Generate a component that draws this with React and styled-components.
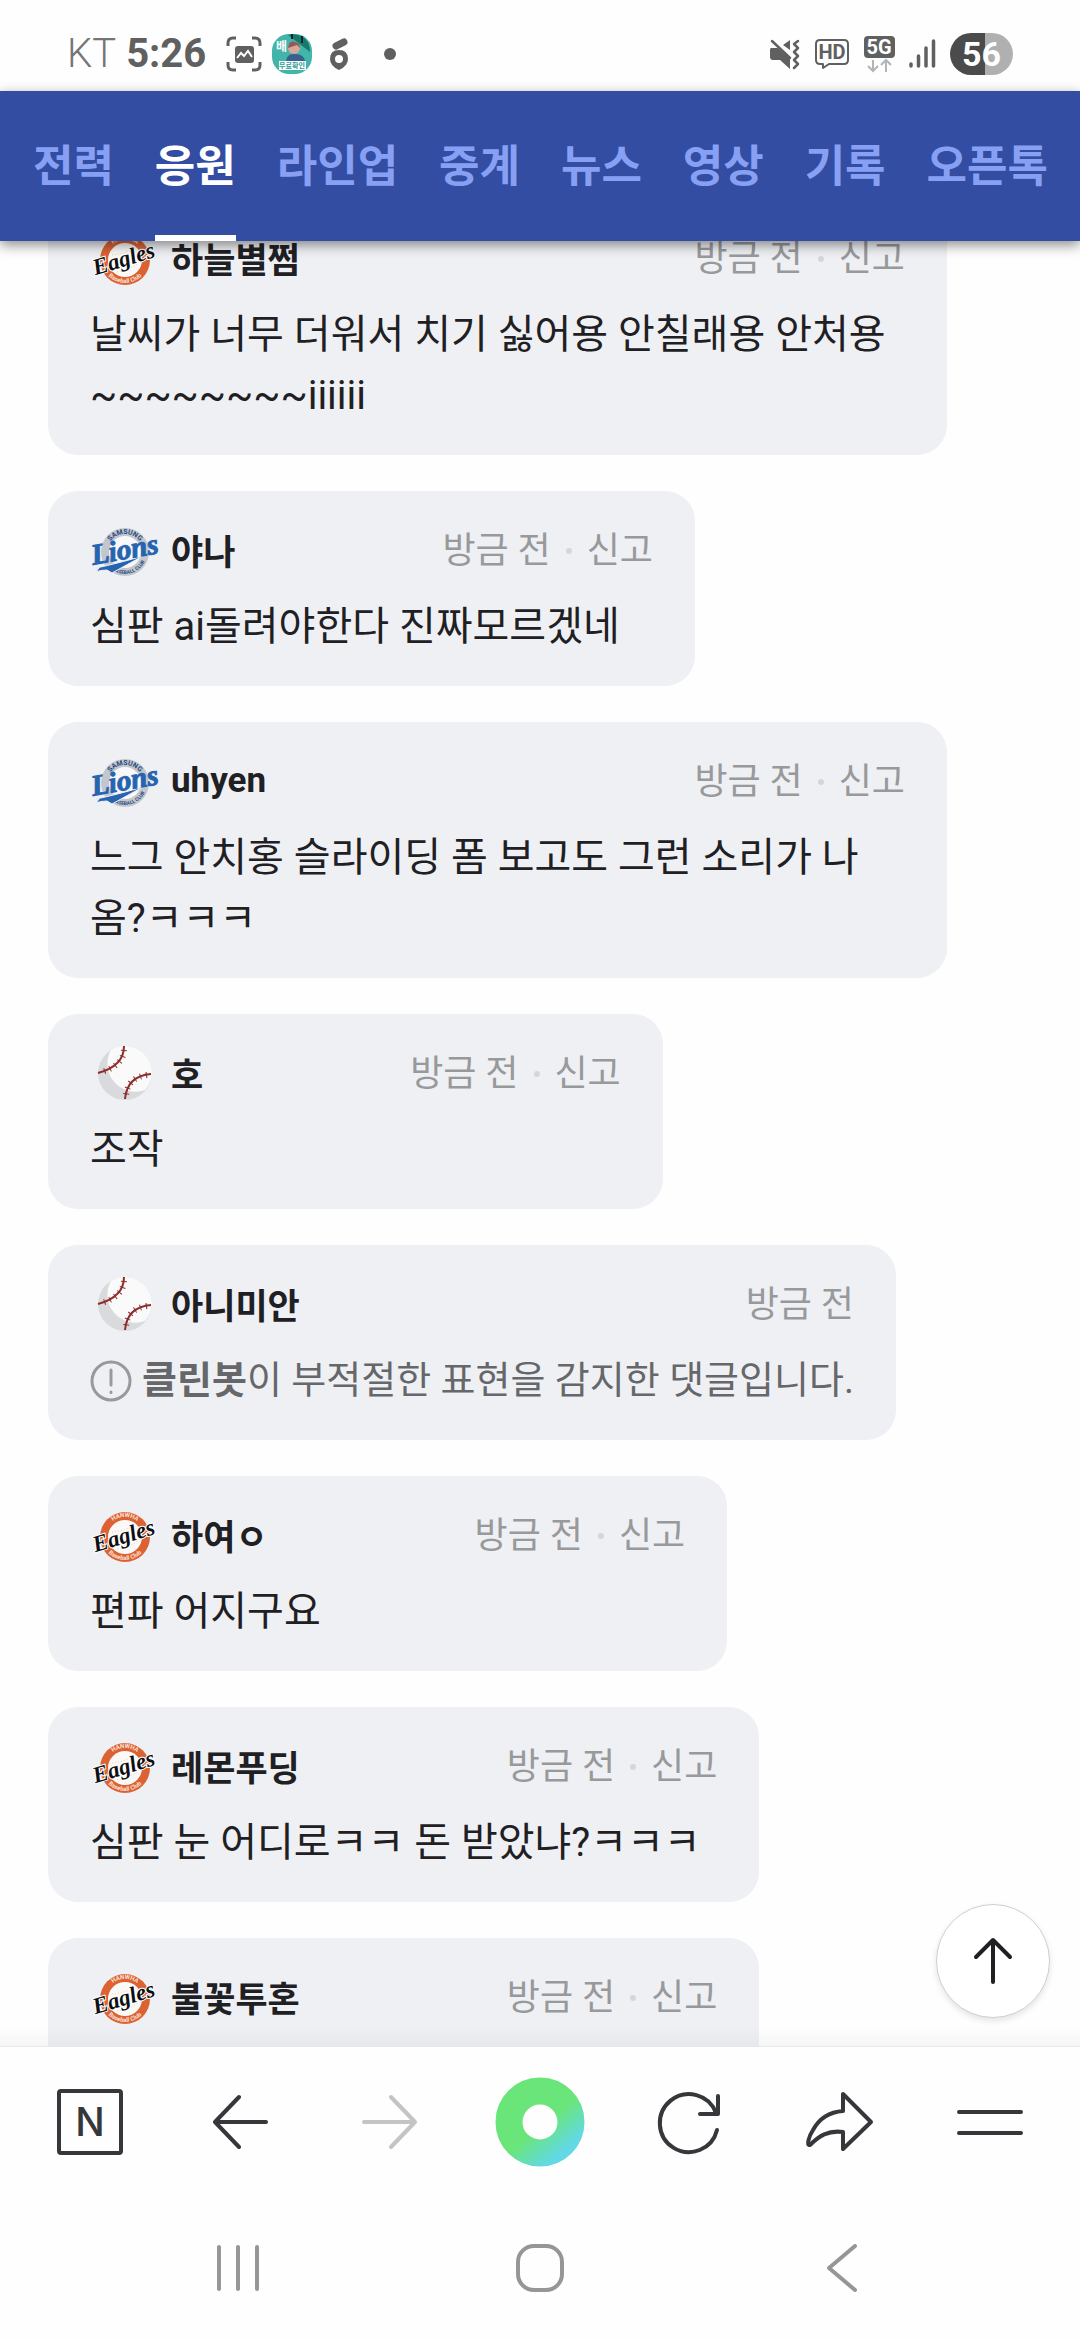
import React, { useId, useState } from 'react';
import styled, { createGlobalStyle } from 'styled-components';

const GlobalStyle = createGlobalStyle`
  * {
    box-sizing: border-box;
  }

  body {
    margin: 0;
    background: #fefefe;
    color: #1f2023;
    font-family: Roboto, 'Noto Sans CJK KR', sans-serif;
  }

  button {
    padding: 0;
    border: none;
    background: none;
    color: inherit;
    font: inherit;
    cursor: pointer;
  }

  svg {
    display: block;
    flex: none;
  }
`;

const Screen = styled.div`
  display: flex;
  flex-direction: column;
  height: 100vh;
  overflow: hidden;
`;

/* status bar */

const StatusBar = styled.div`
  display: flex;
  flex: none;
  align-items: center;
  justify-content: space-between;
  height: 91px;
  padding: 16px 67px 0;
  color: #606060;
`;

const StatusGroup = styled.div`
  display: flex;
  align-items: center;
  gap: ${props => props.$gap}px;
`;

const Carrier = styled.span`
  color: #757575;
  font-size: 40px;
  font-weight: 300;
  line-height: 44px;
`;

const Clock = styled.span`
  margin-right: 10px;
  font-size: 40px;
  font-weight: 700;
  line-height: 44px;
`;

const MoreDot = styled.span`
  width: 12px;
  height: 12px;
  margin-left: 16px;
  border-radius: 50%;
  background: #606060;
`;

const Battery = styled.span`
  width: 63px;
  height: 42px;
  border-radius: 21px;
  background: linear-gradient(90deg, #4b4b4b 56%, #b0b0b0 56%);
  color: #fff;
  font-size: 34px;
  font-weight: 700;
  line-height: 42px;
  text-align: center;
`;

/* tabs */

const TabBar = styled.nav`
  position: relative;
  z-index: 2;
  display: flex;
  flex: none;
  justify-content: space-between;
  height: 150px;
  padding: 0 32px 0 33px;
  background: #324da1;
  box-shadow: 0 4px 12px rgba(0, 0, 0, 0.45);
`;

const Tab = styled.a`
  display: flex;
  align-items: center;
  border-bottom: 6px solid ${props => (props.$active ? '#fff' : 'transparent')};
  color: ${props => (props.$active ? '#fff' : '#87a0f3')};
  font-size: 44px;
  font-weight: 700;
  text-decoration: none;
  white-space: nowrap;
`;

/* comments */

const Feed = styled.main`
  position: relative;
  flex: 1;
  min-height: 0;
  overflow: hidden;

  &::after {
    content: '';
    position: absolute;
    right: 0;
    bottom: 0;
    left: 0;
    height: 20px;
    background: linear-gradient(rgba(30, 40, 70, 0), rgba(30, 40, 70, 0.04));
  }
`;

const CommentList = styled.ul`
  display: flex;
  flex-direction: column;
  align-items: flex-start;
  gap: 36px;
  margin: -42px 0 0;
  padding: 0 48px;
  list-style: none;
`;

const Card = styled.li`
  width: ${props => (props.$long ? '100%' : 'fit-content')};
  max-width: 899px;
  padding: 30px 42px 29px;
  border-radius: 30px;
  background: #eff0f4;
`;

const CardHeader = styled.div`
  display: flex;
  align-items: center;
  height: 56px;
`;

const Nickname = styled.strong`
  margin: 0 207px 0 11px;
  font-size: 35px;
  font-weight: 700;
  white-space: nowrap;
`;

const Meta = styled.div`
  display: flex;
  align-items: center;
  gap: 15px;
  margin-left: auto;
  padding-top: 4px;
  color: #98999b;
  font-size: 36px;
  line-height: 48px;
  white-space: nowrap;
`;

const MetaDot = styled.span`
  width: 6px;
  height: 6px;
  border-radius: 50%;
  background: #d5d6da;
`;

const Message = styled.p`
  min-height: 61px;
  margin: 19px 0 0;
  font-size: 40px;
  line-height: 61px;
  white-space: pre-line;
  word-break: break-all;
`;

const CleanbotMessage = styled.p`
  display: flex;
  align-items: center;
  gap: 10px;
  margin: 19px 0 0;
  color: #66676a;
  font-size: 38px;
  line-height: 61px;
`;

const TopButton = styled.button`
  position: absolute;
  right: 30px;
  bottom: 28px;
  z-index: 1;
  display: flex;
  align-items: center;
  justify-content: center;
  width: 114px;
  height: 114px;
  border: 1px solid #cfcfd1;
  border-radius: 50%;
  background: #fff;
  box-shadow: 0 3px 6px rgba(0, 0, 0, 0.1);
`;

/* bottom bars */

const BrowserBar = styled.nav`
  display: grid;
  flex: none;
  grid-template-columns: repeat(7, 1fr);
  height: 150px;
  padding: 0 15px;
  border-top: 1px solid #e6e7ea;
  background: #fefefe;
  color: #36373b;
`;

const SystemBar = styled.nav`
  display: grid;
  flex: none;
  grid-template-columns: repeat(3, 1fr);
  height: 144px;
  padding: 0 87px;
  color: #969696;
`;

const BarButton = styled.button`
  display: flex;
  align-items: center;
  justify-content: center;

  &:disabled {
    color: #c4c4c4;
    cursor: default;
  }
`;

const Line = ({ size = 72, width = 4, children }) => (
  <svg
    width={size}
    height={size}
    viewBox={`0 0 ${size} ${size}`}
    fill="none"
    stroke="currentColor"
    strokeWidth={width}
    strokeLinecap="round"
    strokeLinejoin="round"
    aria-hidden="true"
  >
    {children}
  </svg>
);

const EaglesLogo = () => {
  const id = useId();
  return (
    <svg width="70" height="56" viewBox="0 0 70 56" role="img" aria-label="Eagles">
      <defs>
        <path id={`${id}t`} d="M15 31 A20 20 0 0 1 55 31" />
        <path id={`${id}b`} d="M12 31 A23 23 0 0 0 58 31" />
      </defs>
      <circle cx="35" cy="31" r="25" fill="#dc6234" />
      <circle cx="35" cy="31" r="17" fill="#fbf9f5" />
      <path d="M22 26 Q34 25 45 19 M27 43 Q38 42 49 34" fill="none" stroke="#e3cfc2" strokeWidth="1" strokeDasharray="1 2" />
      <text fill="#f9e3d8" fontFamily="Roboto" fontSize="6" fontWeight="700" textAnchor="middle">
        <textPath href={`#${id}t`} startOffset="50%">HANWHA</textPath>
      </text>
      <text fill="#f9e3d8" fontFamily="Roboto" fontSize="6" fontWeight="700" textAnchor="middle">
        <textPath href={`#${id}b`} startOffset="50%">Baseball Club</textPath>
      </text>
      <text
        x="34"
        y="37"
        transform="rotate(-17 35 31)"
        textAnchor="middle"
        fontFamily="Liberation Serif"
        fontSize="23"
        fontStyle="italic"
        fontWeight="700"
        fill="#0d0f14"
        stroke="#fff"
        strokeWidth="2"
        paintOrder="stroke"
      >
        Eagles
      </text>
    </svg>
  );
};

const LionsLogo = () => {
  const id = useId();
  return (
    <svg width="70" height="56" viewBox="0 0 70 56" role="img" aria-label="Lions">
      <defs>
        <path id={`${id}t`} d="M17 31 A18 18 0 0 1 53 31" />
        <path id={`${id}b`} d="M13 31 A22 22 0 0 0 57 31" />
      </defs>
      <circle cx="35" cy="31" r="24" fill="#c3c7cd" />
      <circle cx="35" cy="31" r="16" fill="#f7f8fa" />
      <text fill="#274a80" fontFamily="Roboto" fontSize="7" fontWeight="700" textAnchor="middle">
        <textPath href={`#${id}t`} startOffset="50%">SAMSUNG</textPath>
      </text>
      <text fill="#274a80" fontFamily="Roboto" fontSize="5" fontWeight="700" textAnchor="middle">
        <textPath href={`#${id}b`} startOffset="58%">BASEBALL CLUB</textPath>
      </text>
      <path d="M1 48 Q22 44 53 35 Q38 43 22 52 L17 49 Q10 49 6 51 L9 47 Z" fill="#2764b0" stroke="#eff0f4" strokeWidth="1" />
      <text
        x="35"
        y="38"
        transform="rotate(-10 35 31)"
        textAnchor="middle"
        fontFamily="Liberation Serif"
        fontSize="29"
        fontStyle="italic"
        fontWeight="700"
        fill="#2764b0"
        stroke="#2764b0"
        strokeWidth="1"
      >
        Lions
      </text>
    </svg>
  );
};

const BaseballLogo = () => (
  <svg width="70" height="56" viewBox="0 0 70 56" fill="none" role="img" aria-label="야구공">
    <circle cx="35" cy="29" r="27" fill="#d9dadc" />
    <path d="M62 29 A27 27 0 0 0 21 6 A28 28 0 0 0 55 46 A27 27 0 0 0 62 29 Z" fill="#fafafa" />
    <g stroke="#8d2c2a">
      <path d="M34 2 Q34 22 8 29 M61 30 Q37 32 35 55" strokeWidth="2" />
      <path d="M34 6 Q33 22 11 28 M57 31 Q37 34 36 52" strokeWidth="6" strokeDasharray="1 5" />
    </g>
  </svg>
);

const LOGOS = { eagles: EaglesLogo, lions: LionsLogo, ball: BaseballLogo };

const TABS = ['전력', '응원', '라인업', '중계', '뉴스', '영상', '기록', '오픈톡'];

const COMMENTS = [
  { id: 1, team: 'eagles', name: '하늘별쩜', text: '날씨가 너무 더워서 치기 싫어용 안칠래용 안처용\n~~~~~~~~iiiiii', long: true },
  { id: 2, team: 'lions', name: '야나', text: '심판 ai돌려야한다 진짜모르겠네' },
  { id: 3, team: 'lions', name: 'uhyen', text: '느그 안치홍 슬라이딩 폼 보고도 그런 소리가 나\n옴?ㅋㅋㅋ', long: true },
  { id: 4, team: 'ball', name: '호', text: '조작' },
  { id: 5, team: 'ball', name: '아니미안', hidden: true },
  { id: 6, team: 'eagles', name: '하여ㅇ', text: '편파 어지구요' },
  { id: 7, team: 'eagles', name: '레몬푸딩', text: '심판 눈 어디로ㅋㅋ 돈 받았냐?ㅋㅋㅋ' },
  { id: 8, team: 'eagles', name: '불꽃투혼', text: '' },
];

const Comment = ({ comment }) => {
  const Logo = LOGOS[comment.team];

  return (
    <Card $long={comment.long}>
      <CardHeader>
        <Logo />
        <Nickname>{comment.name}</Nickname>
        <Meta>
          <span>방금 전</span>
          {!comment.hidden && (
            <>
              <MetaDot />
              <button type="button">신고</button>
            </>
          )}
        </Meta>
      </CardHeader>
      {comment.hidden ? (
        <CleanbotMessage>
          <Line size={42} width={3}>
            <circle cx="21" cy="21" r="19" stroke="#98999b" />
            <path d="M21 10 V25 M21 32 V32.5" stroke="#98999b" />
          </Line>
          <span><b>클린봇</b>이 부적절한 표현을 감지한 댓글입니다.</span>
        </CleanbotMessage>
      ) : (
        <Message>{comment.text}</Message>
      )}
    </Card>
  );
};

const StatusIcons = () => (
  <StatusGroup $gap={14}>
    <svg width="30" height="32" viewBox="0 0 30 32" fill="none" aria-hidden="true">
      <path d="M20 2 V12 L13 7 Z M1 10 H8 L20 21 V31 L10 22 H3 Q0 22 0 19 V12 Q0 10 1 10 Z" fill="#606060" />
      <path d="M2 3 L20 20" stroke="#606060" strokeWidth="2.5" strokeLinecap="round" />
      <path d="M28 3 L24 6 L28 10 L24 14 L28 18 L24 22 L28 26 L24 30" stroke="#606060" strokeWidth="2.5" strokeLinecap="round" strokeLinejoin="round" />
    </svg>
    <svg width="36" height="32" viewBox="0 0 36 32" aria-hidden="true">
      <path d="M6 2 H30 Q34 2 34 6 V22 Q34 26 30 26 H15 L9 30 V26 H6 Q2 26 2 22 V6 Q2 2 6 2 Z" fill="none" stroke="#606060" strokeWidth="2" strokeLinejoin="round" />
      <text x="18" y="21" textAnchor="middle" fontFamily="Roboto" fontSize="20" fontWeight="700" fill="#606060">HD</text>
    </svg>
    <svg width="31" height="38" viewBox="0 0 31 38" aria-hidden="true">
      <rect width="31" height="22" y="1" rx="4" fill="#606060" />
      <text x="15" y="19" textAnchor="middle" fontFamily="Roboto" fontSize="20" fontWeight="700" fill="#fff">5G</text>
      <path d="M9 25 V36 M4 31 L9 36 L14 31 M22 37 V25 M17 30 L22 25 L27 30" fill="none" stroke="#b4b4b4" strokeWidth="2" />
    </svg>
    <svg width="27" height="30" viewBox="0 0 27 30" stroke="#606060" strokeWidth="3.5" strokeLinecap="round" aria-hidden="true">
      <path d="M2 25 V27 M9.5 17 V27 M17 9 V27 M24.5 2 V27" />
    </svg>
    <Battery>56</Battery>
  </StatusGroup>
);

const NotificationIcons = () => (
  <>
    <svg width="36" height="36" viewBox="0 0 36 36" fill="none" aria-hidden="true">
      <path d="M2 10 V7 Q2 2 7 2 H10 M26 2 H29 Q34 2 34 7 V10 M34 26 V29 Q34 34 29 34 H26 M10 34 H7 Q2 34 2 29 V26" stroke="#606060" strokeWidth="3" />
      <rect x="9" y="10" width="19" height="17" rx="3" fill="#606060" />
      <path d="M11 22 L15 17 L18 20 L22 15 L26 21" stroke="#fff" strokeWidth="2" />
    </svg>
    <svg width="40" height="40" viewBox="0 0 40 40" aria-hidden="true">
      <rect width="40" height="40" rx="17" fill="#42b5ab" />
      <path d="M16 1 L38 18 Q38 7 31 3 Q24 -1 16 1 Z" fill="#17796a" />
      <path d="M20 0 V5 M30 2 V9" stroke="#123" strokeWidth="2" />
      <circle cx="22" cy="14" r="6" fill="#d8a79a" />
      <path d="M16 14 Q17 6 23 8 Q28 9 28 14 L25 11 Z" fill="#8e5a5c" />
      <path d="M14 27 Q15 19 23 20 Q32 20 33 27 Z" fill="#39618e" />
      <text x="4" y="17" fontFamily="Noto Sans CJK KR" fontSize="12" fontWeight="700" fill="#fff">배</text>
      <rect x="7" y="27" width="27" height="9" fill="#fff" />
      <text x="20" y="34" textAnchor="middle" fontFamily="Noto Sans CJK KR" fontSize="7" fontWeight="700" fill="#2c9c93">무료확인</text>
    </svg>
    <svg width="36" height="34" viewBox="0 0 36 34" aria-hidden="true">
      <path d="M14 9 L22 5" stroke="#606060" strokeWidth="7" strokeLinecap="round" />
      <path d="M17 33 Q8 29 8 22 Q8 13 17 13 Q26 13 26 22 Q26 29 17 33 Z M17 18 A4 4 0 0 0 17 26 A4 4 0 0 0 17 18 Z" fill="#606060" fillRule="evenodd" />
    </svg>
  </>
);

const App = () => {
  const [activeTab, setActiveTab] = useState('응원');

  return (
    <Screen>
      <GlobalStyle />
      <StatusBar>
        <StatusGroup $gap={10}>
          <Carrier>KT</Carrier>
          <Clock>5:26</Clock>
          <NotificationIcons />
          <MoreDot />
        </StatusGroup>
        <StatusIcons />
      </StatusBar>

      <TabBar>
        {TABS.map(tab => (
          <Tab key={tab} href={`#${tab}`} $active={tab === activeTab} onClick={() => setActiveTab(tab)}>
            {tab}
          </Tab>
        ))}
      </TabBar>

      <Feed>
        <CommentList>
          {COMMENTS.map(comment => (
            <Comment key={comment.id} comment={comment} />
          ))}
        </CommentList>
        <TopButton type="button" aria-label="맨 위로">
          <Line size={48}>
            <path d="M24 3 V45 M7 20 L24 3 L41 20" />
          </Line>
        </TopButton>
      </Feed>

      <BrowserBar>
        <BarButton type="button" aria-label="네이버 홈">
          <svg width="66" height="66" viewBox="0 0 66 66" aria-hidden="true">
            <rect x="2" y="2" width="62" height="62" rx="2" fill="none" stroke="currentColor" strokeWidth="4" />
            <text x="33" y="47" textAnchor="middle" fontFamily="Inter" fontSize="39" fontWeight="500" fill="currentColor">N</text>
          </svg>
        </BarButton>
        <BarButton type="button" aria-label="뒤로">
          <Line>
            <path d="M62 36 H11 M35 11 L11 36 L35 61" />
          </Line>
        </BarButton>
        <BarButton type="button" aria-label="앞으로" disabled>
          <Line>
            <path d="M10 36 H61 M37 11 L61 36 L37 61" />
          </Line>
        </BarButton>
        <BarButton type="button" aria-label="그린닷">
          <svg width="90" height="90" viewBox="0 0 90 90" aria-hidden="true">
            <defs>
              <linearGradient id="greendot" x1="0.2" y1="0.1" x2="0.9" y2="0.95">
                <stop offset="0.5" stopColor="#6ae579" />
                <stop offset="1" stopColor="#62d9e4" />
              </linearGradient>
            </defs>
            <circle cx="45" cy="45" r="31" fill="none" stroke="url(#greendot)" strokeWidth="27" />
          </svg>
        </BarButton>
        <BarButton type="button" aria-label="새로고침">
          <Line>
            <path d="M63 44 A29 29 0 1 1 62 27" />
            <path d="M64 10 V28 H46" />
          </Line>
        </BarButton>
        <BarButton type="button" aria-label="공유">
          <Line>
            <path d="M39 8 L67 36 L39 63 V46 C24 44 15 50 6 59 C2 60 5 50 9 44 C15 33 25 26 39 25 Z" />
          </Line>
        </BarButton>
        <BarButton type="button" aria-label="메뉴">
          <Line>
            <path d="M5 26 H67 M5 47 H67" />
          </Line>
        </BarButton>
      </BrowserBar>

      <SystemBar>
        <BarButton type="button" aria-label="최근 앱">
          <Line size={48}>
            <path d="M5 3 V45 M24 3 V45 M43 3 V45" />
          </Line>
        </BarButton>
        <BarButton type="button" aria-label="홈">
          <Line size={48}>
            <rect x="2" y="2" width="44" height="44" rx="16" />
          </Line>
        </BarButton>
        <BarButton type="button" aria-label="뒤로 가기">
          <Line size={48}>
            <path d="M37 2 L11 24 L37 46" />
          </Line>
        </BarButton>
      </SystemBar>
    </Screen>
  );
};

export default App;
